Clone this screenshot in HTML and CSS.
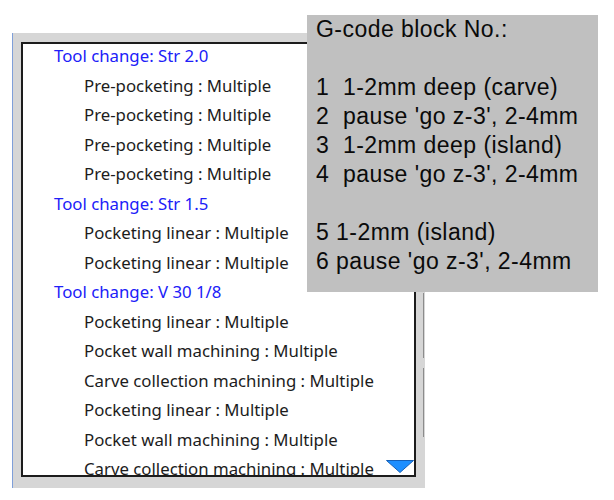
FILE: index.html
```html
<!DOCTYPE html>
<html lang="en">
<head>
    <meta charset="UTF-8">
    <title>G-code blocks</title>
    <link rel="stylesheet" href="styles.css">
</head>
<body>
    <div class="panel">
        <div class="list">
            <div class="rows">
                <div class="row tool">Tool change: Str 2.0</div>
                <div class="row op">Pre-pocketing : Multiple</div>
                <div class="row op">Pre-pocketing : Multiple</div>
                <div class="row op">Pre-pocketing : Multiple</div>
                <div class="row op">Pre-pocketing : Multiple</div>
                <div class="row tool">Tool change: Str 1.5</div>
                <div class="row op">Pocketing linear : Multiple</div>
                <div class="row op">Pocketing linear : Multiple</div>
                <div class="row tool">Tool change: V 30 1/8</div>
                <div class="row op">Pocketing linear : Multiple</div>
                <div class="row op">Pocket wall machining : Multiple</div>
                <div class="row op">Carve collection machining : Multiple</div>
                <div class="row op">Pocketing linear : Multiple</div>
                <div class="row op">Pocket wall machining : Multiple</div>
                <div class="row op">Carve collection machining : Multiple</div>
            </div>
            <svg class="more" width="28" height="13" viewBox="0 0 28 13">
                <polygon points="0.5,0.5 27.5,0.5 14,12.5" fill="#1e8fff" stroke="#1560b8" stroke-width="1"/>
            </svg>
        </div>
        <div class="track">
            <div class="groove g1"></div>
            <div class="groove g2"></div>
        </div>
    </div>

    <div class="note">G-code block No.:

1  1-2mm deep (carve)
2  pause 'go z-3', 2-4mm
3  1-2mm deep (island)
4  pause 'go z-3', 2-4mm

5 1-2mm (island)
6 pause 'go z-3', 2-4mm</div>
</body>
</html>
```

FILE: styles.css
```css
body {
    margin: 0;
    background: #ffffff;
    font-family: 'Noto Sans', 'Open Sans', sans-serif;
}
.panel {
    display: flex;
    margin: 33px 0 0 12px;
    width: 404px;
    height: 445px;
    padding: 9px 0 1px 8px;
    background-color: #d6d6d6;
    border-left: 1px solid #7f9fd9;
}
.list {
    position: relative;
    width: 391px;
    height: 431px;
    background-color: #ffffff;
    border: 2px solid #1c1c1c;
    overflow: hidden;
}
.rows {
    margin-top: -3px;
    padding-left: 31px;
}
.row {
    font-size: 16.8px;
    line-height: 29.5px;
    white-space: nowrap;
    color: #1c1c1c;
}
.row.tool {
    color: #2020f8;
}
.row.op {
    padding-left: 30px;
}
.more {
    position: absolute;
    right: 0;
    bottom: 2px;
}
.track {
    width: 9px;
    padding-left: 7px;
    box-sizing: border-box;
}
.groove {
    width: 1px;
    background-color: #8c8c8c;
}
.g1 {
    margin-top: 251px;
    height: 65px;
}
.g2 {
    margin-top: 10px;
    height: 69px;
}
.note {
    position: absolute;
    left: 307px;
    top: 15px;
    width: 273px;
    height: 277px;
    padding: 0 9px;
    background-color: #c0c0c0;
    font-family: 'Liberation Sans', Arial, sans-serif;
    font-size: 23px;
    letter-spacing: 0.45px;
    line-height: 29px;
    color: #0a0a0a;
    white-space: pre;
}
```
